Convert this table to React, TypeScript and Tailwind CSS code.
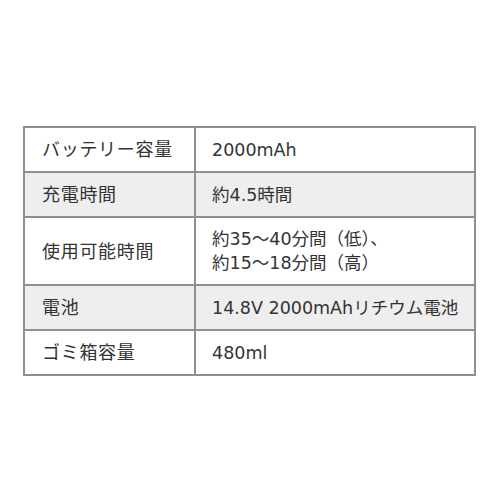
const rows: { label: string; value: string[]; gray: boolean; tall?: boolean }[] = [
  { label: "バッテリー容量", value: ["2000mAh"], gray: false },
  { label: "充電時間", value: ["約4.5時間"], gray: true },
  { label: "使用可能時間", value: ["約35～40分間（低）、", "約15～18分間（高）"], gray: false, tall: true },
  { label: "電池", value: ["14.8V 2000mAhリチウム電池"], gray: true },
  { label: "ゴミ箱容量", value: ["480ml"], gray: false },
];

export default function App() {
  return (
    <div
      className="w-[500px] h-[500px] bg-white pt-[126px] pl-[23px]"
      style={{ fontFamily: '"DejaVu Sans", "Noto Sans CJK JP", sans-serif' }}
    >
      <table className="border-collapse w-[453px] text-[#333333]">
        <tbody>
          {rows.map((r) => (
            <tr key={r.label} className={r.gray ? "bg-[#eeeeee]" : "bg-white"}>
              <td
                className={`border-2 border-[#8f8f8f] w-[171px] pl-[17px] align-middle text-[18px] tracking-[0.7px] ${
                  r.tall ? "h-[68px]" : "h-[45px]"
                }`}
              >
                {r.label}
              </td>
              <td className="border-2 border-[#8f8f8f] pl-[16px] align-middle text-[17.5px] leading-[24px]">
                {r.value.map((v) => (
                  <div key={v}>{v}</div>
                ))}
              </td>
            </tr>
          ))}
        </tbody>
      </table>
    </div>
  );
}
